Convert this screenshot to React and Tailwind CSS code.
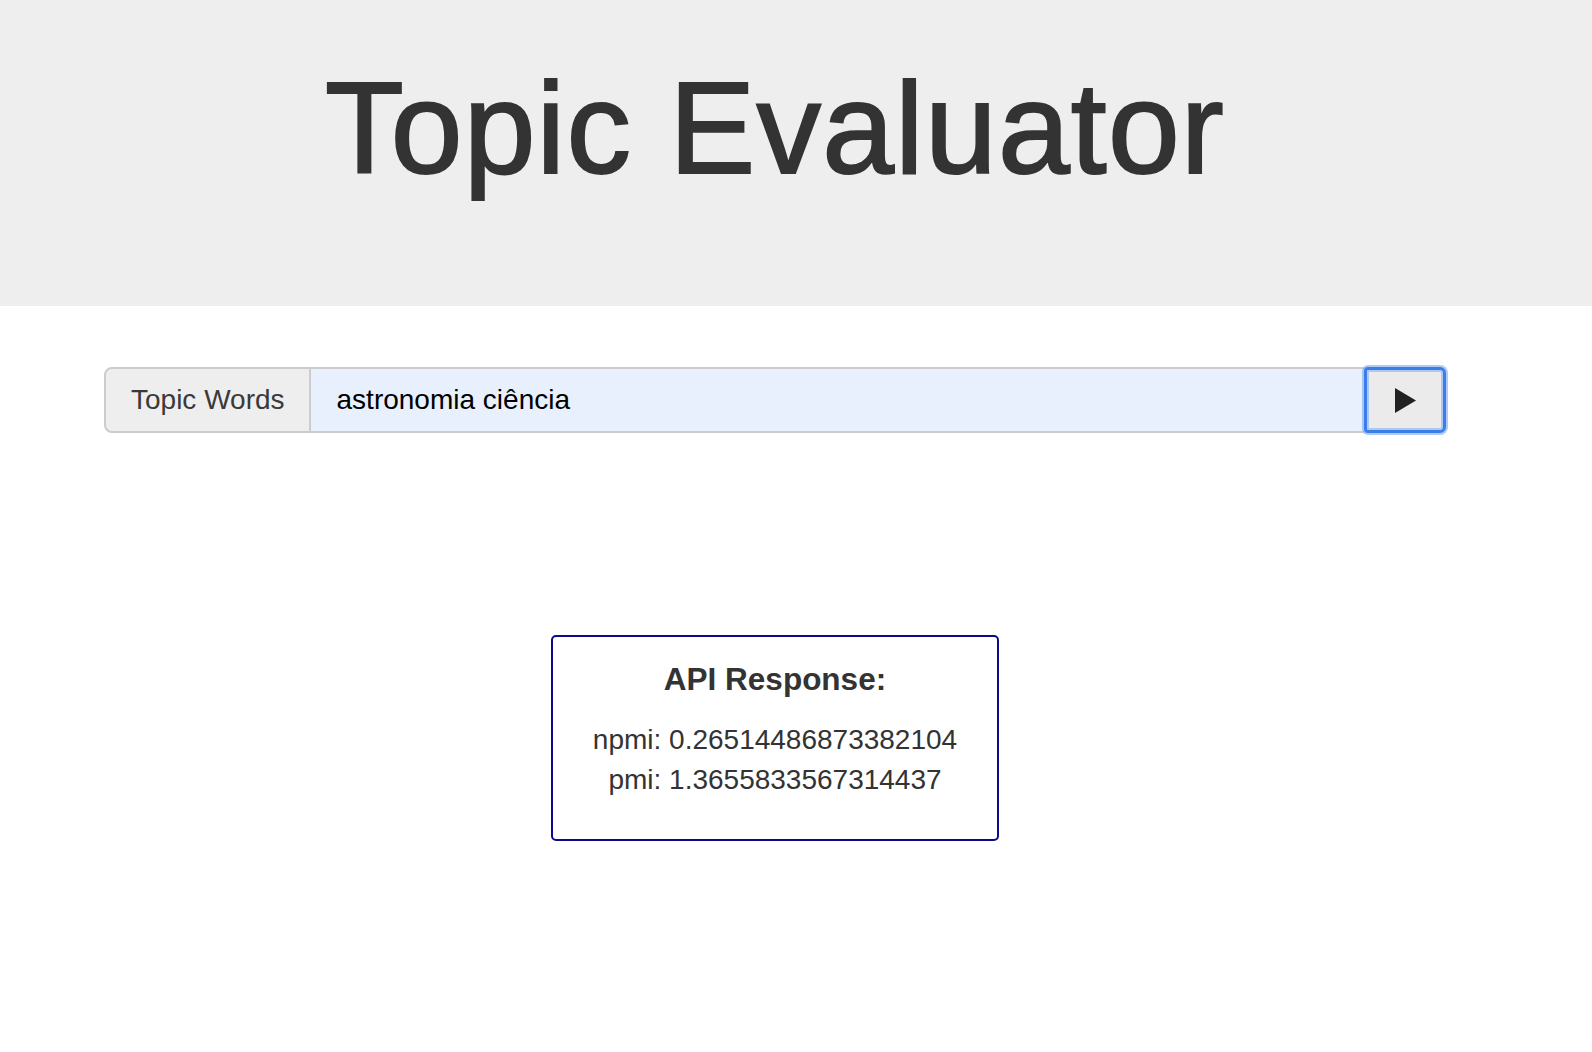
export default function App() {
  const font = { fontFamily: '"Liberation Sans", Arial, Helvetica, sans-serif' };
  return (
    <div className="min-h-[1052px] bg-white text-[#333]" style={font}>
      <header className="h-[306px] w-full bg-[#eeeeee]">
        <div className="w-[1550px] pt-[58px] flex justify-center">
          <h1 className="text-[129px] leading-[1.1] font-normal text-[#333] m-0 tracking-[1.2px] [-webkit-text-stroke:2px_#333]">Topic Evaluator</h1>
        </div>
      </header>

      <div className="w-[1550px]">
        <div className="pt-[61px] px-[104px]">
          <div className="flex h-[66px] w-full">
            <div className="flex items-center h-full pl-[25px] pr-[24px] bg-[#eeeeee] border-2 border-[#cccccc] rounded-l-[8px] text-[28px] text-[#3a3a3a]">
              Topic Words
            </div>
            <div className="flex-1 flex items-center h-full bg-[#e8f0fe] border-y-2 border-[#cccccc] pl-[26px] text-[28px] text-black">
              astronomia ciência
            </div>
            <button className="relative h-full w-[82px] flex items-center justify-center bg-[#ebebeb] border-[3px] border-[#3b7de9] rounded-r-[6px] rounded-l-[4px] shadow-[0_0_0_2px_rgba(96,150,245,0.5),inset_0_0_0_2px_rgba(150,185,245,0.7)]">
              <svg width="21" height="25" viewBox="0 0 21 25" className="ml-[1px]">
                <polygon points="0,0 21,12.5 0,25" fill="#222" />
              </svg>
            </button>
          </div>
        </div>

        <div className="flex justify-center pt-[202px]">
          <div className="w-[448px] border-2 border-[#0b0b8a] rounded-[5px] pt-[25px] pb-[39px] text-center">
            <h3 className="text-[31.5px] leading-[1.1] font-bold text-[#333] mb-[23px]">API Response:</h3>
            <p className="text-[28px] leading-[40px] text-[#333]">npmi: 0.26514486873382104</p>
            <p className="text-[28px] leading-[40px] text-[#333]">pmi: 1.3655833567314437</p>
          </div>
        </div>
      </div>
    </div>
  );
}
